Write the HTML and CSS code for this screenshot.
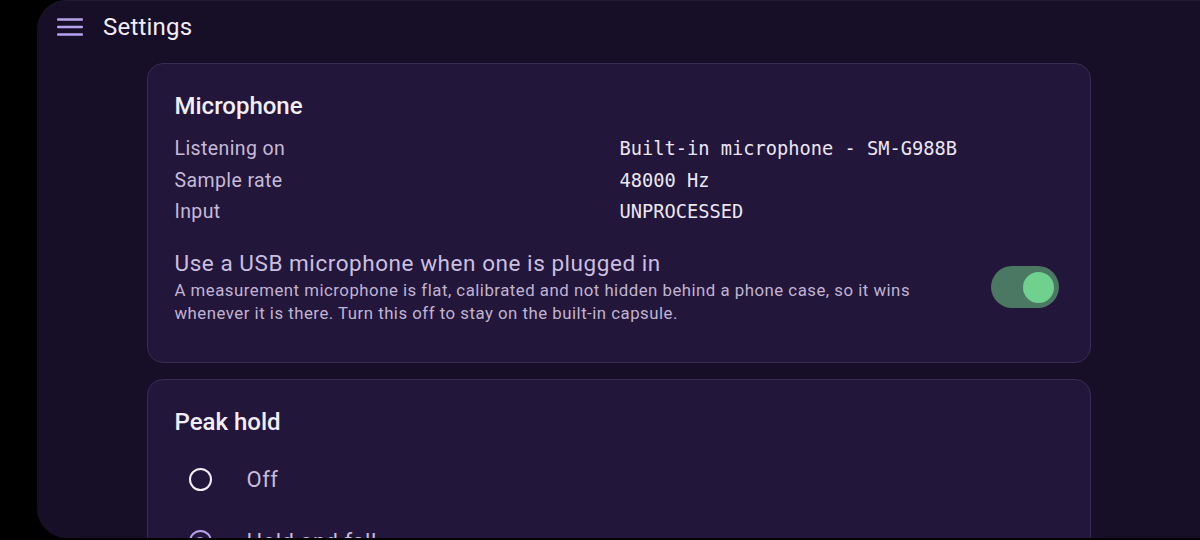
FILE: index.html
```html
<!DOCTYPE html>
<html lang="en">
<head>
<meta charset="utf-8">
<title>Settings</title>
<link rel="stylesheet" href="styles.css">
</head>
<body>
<div class="panel">
  <header class="topbar">
    <svg class="menu" width="26" height="20" viewBox="0 0 26 20" aria-hidden="true">
      <rect x="0" y="1.2" width="26" height="2.6" rx="1" fill="#b8a2ee"/>
      <rect x="0" y="8.7" width="26" height="2.6" rx="1" fill="#b8a2ee"/>
      <rect x="0" y="16.2" width="26" height="2.6" rx="1" fill="#b8a2ee"/>
    </svg>
    <h1 class="page-title">Settings</h1>
  </header>
  <main class="content">
    <section class="card">
      <h2 class="card-title">Microphone</h2>
      <div class="info">
        <div class="info-label">Listening on</div>
        <div class="info-value">Built-in microphone - SM-G988B</div>
        <div class="info-label">Sample rate</div>
        <div class="info-value">48000 Hz</div>
        <div class="info-label">Input</div>
        <div class="info-value">UNPROCESSED</div>
      </div>
      <div class="switch-row">
        <div class="switch-text">
          <div class="switch-label">Use a USB microphone when one is plugged in</div>
          <div class="switch-desc">A measurement microphone is flat, calibrated and not hidden behind a phone case, so it wins whenever it is there. Turn this off to stay on the built-in capsule.</div>
        </div>
        <div class="switch on"><div class="thumb"></div></div>
      </div>
    </section>
    <section class="card">
      <h2 class="card-title">Peak hold</h2>
      <div class="radio-row">
        <span class="radio"></span>
        <span class="radio-label">Off</span>
      </div>
      <div class="radio-row">
        <span class="radio checked"></span>
        <span class="radio-label">Hold and fall</span>
      </div>
    </section>
  </main>
</div>
</body>
</html>
```

FILE: styles.css
```css
html, body {
  margin: 0;
  padding: 0;
  height: 540px;
  overflow: hidden;
  background: #000;
  font-family: Roboto, "Noto Sans", sans-serif;
}

.panel {
  margin-left: 37px;
  height: 538px;
  background: #170f27;
  border-radius: 30px 0 0 30px;
  border-top: 1px solid #221a30;
  overflow: hidden;
  box-sizing: border-box;
}

.topbar {
  display: flex;
  align-items: center;
  height: 51px;
  padding-left: 20px;
}

.menu {
  display: block;
}

.page-title {
  margin: 0 0 0 20px;
  font-size: 24px;
  font-weight: 400;
  color: #f1ecf7;
  line-height: 1;
  letter-spacing: 0.2px;
}

.content {
  width: 944px;
  margin: 11px auto 0;
  display: flex;
  flex-direction: column;
  gap: 16px;
}

.card {
  background: #22163a;
  border: 1px solid #392c55;
  border-radius: 16px;
  padding: 27px 31px 37px 27px;
}

.card-title {
  margin: 0 0 12px;
  font-size: 24px;
  font-weight: 500;
  color: #f3eefa;
  line-height: 30px;
}

.info {
  display: grid;
  grid-template-columns: 445px 1fr;
  grid-auto-rows: 31.5px;
  align-items: center;
}

.info-label {
  font-size: 19.5px;
  letter-spacing: 0.4px;
  color: #c6bad8;
}

.info-value {
  font-family: "DejaVu Sans Mono", "Liberation Mono", monospace;
  font-size: 18.7px;
  color: #ece6f4;
}

.switch-row {
  display: flex;
  align-items: center;
  gap: 40px;
  margin-top: 20px;
}

.switch-text {
  flex: 1;
}

.switch-label {
  font-size: 22.5px;
  letter-spacing: 0.55px;
  color: #cbbfe0;
  line-height: 30px;
}

.switch-desc {
  font-size: 16.8px;
  letter-spacing: 0.5px;
  color: #c0b4d2;
  line-height: 23px;
  margin-top: 1px;
}

.switch {
  width: 68px;
  height: 42px;
  border-radius: 21px;
  background: #4b7862;
  display: flex;
  align-items: center;
  justify-content: flex-end;
  padding: 0 5px;
  box-sizing: border-box;
  flex: none;
  margin-top: 2px;
}

.thumb {
  width: 31px;
  height: 31px;
  border-radius: 50%;
  background: #6fd18d;
}

.radio-row {
  display: flex;
  align-items: center;
  height: 62px;
  margin-left: 14px;
}

.radio {
  width: 19px;
  height: 19px;
  border: 2.6px solid #f3eefa;
  border-radius: 50%;
  flex: none;
  position: relative;
}

.radio.checked {
  border-color: #b8a2ee;
}

.radio.checked::after {
  content: "";
  position: absolute;
  left: 4.5px;
  top: 4.5px;
  width: 10px;
  height: 10px;
  border-radius: 50%;
  background: #b8a2ee;
}

.radio-label {
  margin-left: 35px;
  font-size: 22px;
  letter-spacing: 0.5px;
  color: #c8bcda;
}
```
